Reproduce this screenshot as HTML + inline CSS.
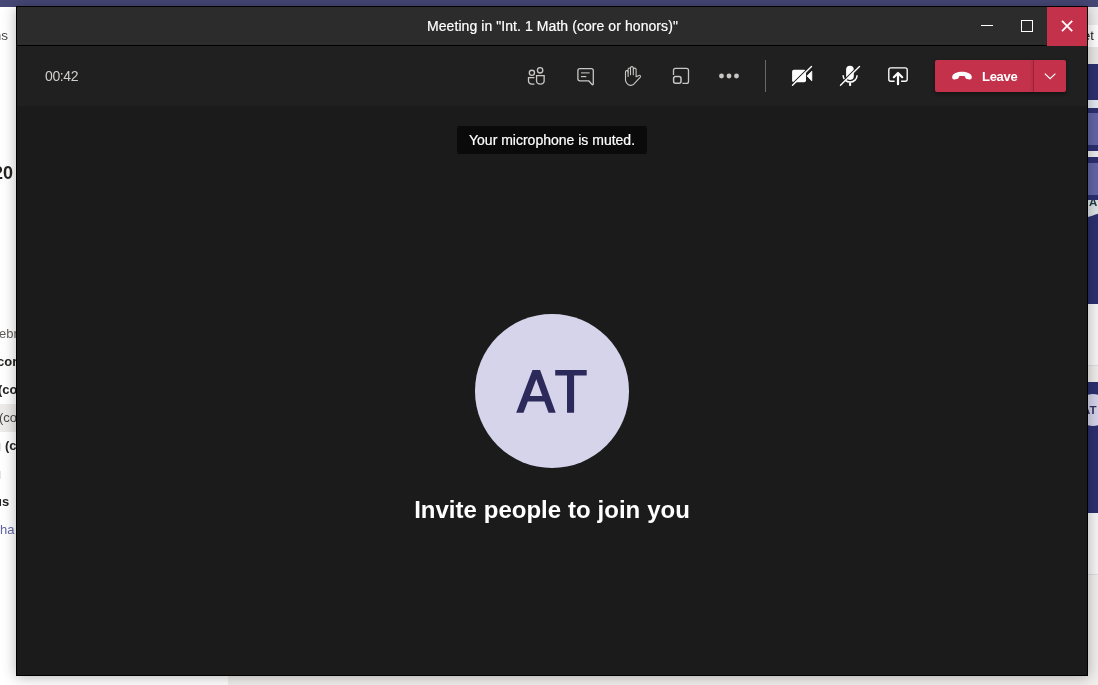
<!DOCTYPE html>
<html><head><meta charset="utf-8">
<style>
*{box-sizing:border-box;margin:0;padding:0}
html,body{width:1098px;height:685px;overflow:hidden;background:#fff;font-family:"Liberation Sans",sans-serif;}
#bg{position:absolute;left:0;top:0;width:1098px;height:685px;overflow:hidden;background:#fff}
#bg div,#bg span{position:absolute}
#bg .purple{left:0;top:0;width:1098px;height:7px;background:#464775}
#bg .botgray{left:228px;top:676px;width:870px;height:9px;background:#f0efee}
#bg .lt{white-space:nowrap;font-size:14px;line-height:16px;color:#484644}
#win{position:absolute;left:16px;top:6px;width:1072px;height:670px;border:1px solid #000;background:#1b1b1b;box-shadow:0 1px 13px rgba(0,0,0,.30);overflow:hidden}
#win div,#win span,#win svg{position:absolute}
#win span,#bg span{will-change:transform}
#title{left:0;top:0;width:1070px;height:38px;background:#2d2c2c}
#ttext{left:410px;top:10px;white-space:nowrap;font-size:14px;color:#fff;-webkit-text-stroke:.2px #fff;line-height:18px;letter-spacing:.07px}
#tline{left:0;top:38px;width:1070px;height:1px;background:#000}
#bar{left:0;top:39px;width:1070px;height:60px;background:#202020}
#close{left:1030px;top:0;width:40px;height:39px;background:#c4314b}
#timer{left:28px;top:60px;font-size:14px;line-height:18px;color:#d2d0ce;letter-spacing:-.4px;white-space:nowrap}
#sep{left:748px;top:53px;width:1px;height:32px;background:#6b6967}
#leave{left:918px;top:53px;width:131px;height:32px;background:#c4314b;border-radius:2px;box-shadow:0 2px 4px rgba(0,0,0,.45)}
#leave .dv{left:95px;top:0;width:4px;height:32px;background:linear-gradient(90deg,rgba(150,30,50,0),rgba(150,30,50,.25) 70%,rgba(140,28,48,.7) 75%,rgba(140,28,48,.7))}
#leave .lb{left:47px;top:8.5px;font-size:13px;font-weight:bold;color:#fff;line-height:16px;letter-spacing:-.3px;white-space:nowrap}
#tip{left:440px;top:119px;width:190px;height:28px;background:#0a0a0a;border-radius:3px}
#tip span{left:12px;top:5px;font-size:14px;line-height:18px;color:#fff;-webkit-text-stroke:.2px #fff;white-space:nowrap}
#av{left:457.8px;top:307px;width:154.7px;height:154.3px;border-radius:50%;background:#d6d4ea}
#avt{left:458px;top:307px;width:155px;height:155px;text-align:center;font-size:60px;line-height:155px;color:#2f2c5c;-webkit-text-stroke:1px #2f2c5c}
#inv{left:300px;top:488px;width:470px;text-align:center;font-size:24px;font-weight:bold;color:#fff;line-height:30px;white-space:nowrap;word-spacing:.25px}
</style></head><body>
<div id="bg">
  <div class="purple"></div><div class="botgray"></div>
  <!-- left strip fragments -->
  <span class="lt" id="l1" style="right:1090px;top:28.3px;font-size:13.5px">ms</span>
  <span class="lt" id="l2" style="right:1085px;top:163px;font-size:18px;line-height:20px;font-weight:bold;color:#252423">20</span>
  <span class="lt" id="l3" style="left:-0.6px;top:326.3px;font-size:13px;color:#605e5c">ebr</span>
  <span class="lt" id="l4" style="left:-3.4px;top:354.3px;font-size:13px;font-weight:bold;color:#252423">cor</span>
  <span class="lt" id="l5" style="left:-1.7px;top:382.3px;font-size:13px;font-weight:bold;color:#252423">(co</span>
  <div style="left:0;top:404px;width:16px;height:28px;background:#edebe9"></div>
  <span class="lt" id="l6" style="left:-1.2px;top:409.7px;font-size:13px;color:#484644">(co</span>
  <span class="lt" id="l7" style="left:5.3px;top:437.7px;font-size:13px;font-weight:bold;color:#252423">(c</span>
  <span class="lt" id="l8" style="right:1088.7px;top:493.7px;font-size:13px;font-weight:bold;color:#252423">us</span>
  <span class="lt" id="l9" style="left:0.1px;top:521.8px;font-size:13px;color:#6264a7">ha</span>
  <div style="left:0;top:443px;width:1px;height:8px;background:#e6e4e2"></div>
  <div style="left:0;top:471px;width:1px;height:8px;background:#e6e4e2"></div>
  <!-- right strip -->
  <div style="left:1088px;top:7px;width:10px;height:18px;background:#ededed"></div>
  <div style="left:1088px;top:25px;width:10px;height:22px;background:#fff"></div>
  <span class="lt" id="r1" style="left:1083.4px;top:28.3px;font-size:13px;color:#252423">et</span>
  <div style="left:1088px;top:47px;width:10px;height:17px;background:#e9e8e7"></div>
  <div style="left:1088px;top:64px;width:10px;height:240px;background:#2c2f6f"></div>
  <div style="left:1088px;top:100px;width:10px;height:8px;background:#e4e8ef"></div>
  <div style="left:1088px;top:113px;width:10px;height:32px;background:#6264a7"></div>
  <div style="left:1088px;top:151px;width:10px;height:6px;background:#ececec"></div>
  <div style="left:1088px;top:163px;width:10px;height:32px;background:#6264a7"></div>
  <div style="left:1088px;top:200px;width:10px;height:20px;overflow:hidden"><div style="left:-58px;top:-78px;width:96px;height:96px;border-radius:50%;background:#dde2e6"></div><span style="left:0.8px;top:-4.4px;font-size:11.5px;line-height:12px;font-weight:bold;color:#1f3c44">A</span></div>
  <div style="left:1088px;top:304px;width:10px;height:61px;background:#f6f6f6"></div>
  <div style="left:1088px;top:365px;width:10px;height:1px;background:#dedede"></div>
  <div style="left:1088px;top:366px;width:10px;height:16px;background:#eeedec"></div>
  <div style="left:1088px;top:382px;width:10px;height:131px;background:#2c2f6f;overflow:hidden"><div style="left:-11px;top:12px;width:32px;height:32px;border-radius:50%;background:#d5d3ea"></div><span id="r2" style="left:-6px;top:21.7px;font-size:11.5px;line-height:12px;font-weight:bold;color:#34315f;white-space:nowrap">AT</span></div>
  <div style="left:1088px;top:513px;width:10px;height:61px;background:#f6f6f6"></div>
  <div style="left:1088px;top:574px;width:10px;height:1px;background:#dcdcdc"></div>
  <div style="left:1088px;top:575px;width:10px;height:110px;background:#f0efee"></div>
</div>
<div id="win">
  <div id="title"><span id="ttext">Meeting in "Int. 1 Math (core or honors)"</span></div>
  <div id="tline"></div>
  <div id="close"></div>
  <div id="bar"></div>
  <span id="timer">00:42</span>
  <div id="sep"></div>
  <div id="leave"><div class="dv"></div><span class="lb" id="lb">Leave</span></div>
  <div id="tip"><span id="tipt">Your microphone is muted.</span></div>
  <div id="av"></div>
  <div id="inv"><span id="invs" style="position:static">Invite people to join you</span></div>
  <svg id="ico" style="left:-17px;top:-7px" width="1098" height="685" viewBox="0 0 1098 685" fill="none">
    <!-- window controls -->
    <rect x="981" y="25" width="12" height="1" fill="#fff"/>
    <rect x="1021.5" y="20.5" width="11" height="11" stroke="#fff" stroke-width="1"/>
    <path d="M1062 20.9 L1072.2 31.1 M1072.2 20.9 L1062 31.1" stroke="#fff" stroke-width="1.8"/>
    <!-- people -->
    <g stroke="#cbc9c7" stroke-width="1.3">
      <circle cx="540.1" cy="70.3" r="2.7"/>
      <circle cx="531.9" cy="72.85" r="2.6"/>
      <path d="M536.55 75.6 H544.15 V81.1 A3.8 3.1 0 0 1 536.55 81.1 Z"/>
      <path d="M534.4 77.6 H528.5 V81 A3.3 3.2 0 0 0 531.8 84.2 H534.4"/>
    </g>
    <!-- chat -->
    <g stroke="#c8c6c4" stroke-width="1.3" stroke-linejoin="round">
      <path d="M579.9 68.6 H591.3 A2 2 0 0 1 593.3 70.6 V84 A0.7 0.7 0 0 1 592.1 84.5 L588.7 80.8 H579.9 A2 2 0 0 1 577.9 78.8 V70.6 A2 2 0 0 1 579.9 68.6 Z"/>
      <path d="M581 72.85 H589.6" stroke-width="1.4" opacity=".75"/>
      <path d="M581 76.6 H586.3" stroke-width="1.2"/>
    </g>
    <!-- hand -->
    <g transform="translate(612 60)" stroke="#c8c6c4" stroke-width="1.1" stroke-linejoin="round" stroke-linecap="round">
      <path d="M13.5 20.3 V11.9 A1.3 1.3 0 0 1 16.1 11.9 V9.25 A1.2 1.2 0 0 1 18.5 9.25 V8.0 A1.4 1.4 0 0 1 21.3 8.0 V9.55 A1.4 1.4 0 0 1 24.1 9.55 V16.8 L27.0 15.4 A1.1 1.1 0 0 1 28.3 17.1 L21.8 24.2 C20.3 25.8 16.6 26.0 14.8 23.2 C13.8 21.8 13.5 21 13.5 20.3 Z"/>
      <path d="M16.1 11.9 V16.4 M18.5 9.25 V14.8 M21.3 9.75 V14.8"/>
    </g>
    <!-- popout -->
    <g stroke="#c8c6c4" stroke-width="1.3">
      <path d="M673.5 75 V70.4 A2 2 0 0 1 675.5 68.4 H686.5 A2 2 0 0 1 688.5 70.4 V81.4 A2 2 0 0 1 686.5 83.4 H682.4"/>
      <rect x="673.6" y="76.4" width="7.4" height="6.9" rx="2" stroke-width="1.5"/>
    </g>
    <!-- more -->
    <g fill="#c8c6c4"><circle cx="721.5" cy="76" r="2.45"/><circle cx="729" cy="76" r="2.45"/><circle cx="736.5" cy="76" r="2.45"/></g>
    <!-- camera off -->
    <g>
      <rect x="792.1" y="69.8" width="13.9" height="12.4" rx="1.8" fill="#fff"/>
      <path d="M807 75.9 L811.8 71.2 V80.9 Z" fill="#fff" stroke="#fff" stroke-width=".8" stroke-linejoin="round"/>
      <path d="M791.7 84.4 L810.7 65.7" stroke="#202020" stroke-width="1.2"/>
      <path d="M792.5 85.2 L811.5 66.5" stroke="#fff" stroke-width="1.4" stroke-linecap="round"/>
    </g>
    <!-- mic off -->
    <g>
      <rect x="846.1" y="65.85" width="7.7" height="14.05" rx="3.85" fill="#fff"/>
      <path d="M843.1 75.3 A7 6.8 0 0 0 857.1 75.3" stroke="#fff" stroke-width="1.5"/>
      <path d="M850.1 82.4 V85.9" stroke="#fff" stroke-width="2"/>
      <path d="M839.7 84.4 L858.7 65.7" stroke="#202020" stroke-width="1.2"/>
      <path d="M840.5 85.2 L859.5 66.5" stroke="#fff" stroke-width="1.4" stroke-linecap="round"/>
    </g>
    <!-- share -->
    <g stroke="#fff">
      <path d="M894.6 81.2 H890.8 A2 2 0 0 1 888.8 79.2 V69.8 A2 2 0 0 1 890.8 67.8 H905.2 A2 2 0 0 1 907.2 69.8 V79.2 A2 2 0 0 1 905.2 81.2 H901.1" stroke-width="1.35"/>
      <path d="M898 84.2 V73.2 M893.8 77.2 L898 73 L902.2 77.2" stroke-width="2.2" stroke-linecap="round" stroke-linejoin="round"/>
    </g>
    <!-- avatar initials -->
    <path fill="#2c2a5b" fill-rule="evenodd" d="M532.5 370.1 H540.1 L555.7 412.8 H548.55 L544.4 401.5 H527.8 L523.5 412.8 H516.2 Z M536.3 379.2 L542.4 395.9 H529.9 Z"/>
    <path fill="#2c2a5b" d="M555.2 370.1 H586.7 V375.5 H574.1 V412.8 H567 V375.5 H555.2 Z"/>
    <!-- leave phone + chevron -->
    <path fill="#fff" d="M952.2 76.8 C952.5 73.5 957.5 71.8 962 71.8 C966.5 71.8 971.5 73.5 971.8 76.8 C972 78.5 971 79.6 969.5 79.4 L967 79 C965.8 78.8 965.3 78 965.2 77 C965.1 76.2 964.6 75.9 962 75.9 C959.4 75.9 958.9 76.2 958.8 77 C958.7 78 958.2 78.8 957 79 L954.5 79.4 C953 79.6 952 78.5 952.2 76.8 Z"/>
    <path d="M1044.8 73.6 L1050.1 78.6 L1055.4 73.6" stroke="#fff" stroke-width="1.2"/>
  </svg>
</div>
</body></html>
